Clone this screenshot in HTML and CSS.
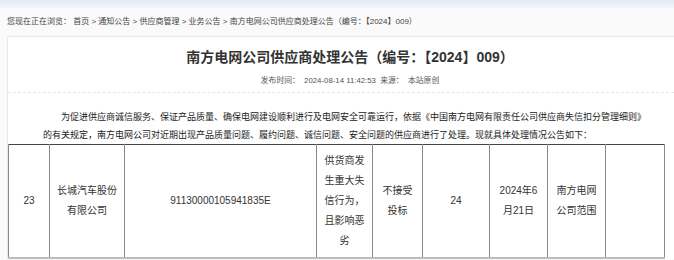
FILE: index.html
```html
<!DOCTYPE html>
<html lang="zh-CN">
<head>
    <meta charset="UTF-8">
    <meta name="viewport" content="width=device-width, initial-scale=1.0">
    <title>南方电网公司供应商处理公告（编号：【2024】009）</title>
    <link rel="stylesheet" href="styles.css">
</head>
<body>
    <div class="top-shadow"></div>
    <div class="crumb">
        您现在正在浏览：&nbsp;首页 &gt; 通知公告 &gt; 供应商管理 &gt; 业务公告 &gt; 南方电网公司供应商处理公告（编号：【2024】009）
    </div>

    <div class="main">
        <div class="head">
            <h1>南方电网公司供应商处理公告（编号：【2024】009）</h1>
            <p class="meta">发布时间：&nbsp; 2024-08-14 11:42:53&nbsp; 来源：&nbsp; 本站原创</p>
        </div>

        <p class="content">为促进供应商诚信服务、保证产品质量、确保电网建设顺利进行及电网安全可靠运行，依据《中国南方电网有限责任公司供应商失信扣分管理细则》的有关规定，南方电网公司对近期出现产品质量问题、履约问题、诚信问题、安全问题的供应商进行了处理。现就具体处理情况公告如下：</p>

        <table class="list">
            <colgroup>
                <col class="c-no">
                <col class="c-name">
                <col class="c-code">
                <col class="c-reason">
                <col class="c-measure">
                <col class="c-months">
                <col class="c-date">
                <col class="c-range">
                <col class="c-note">
            </colgroup>
            <tr>
                <td>23</td>
                <td>长城汽车股份有限公司</td>
                <td>91130000105941835E</td>
                <td>供货商发生重大失信行为，且影响恶劣</td>
                <td>不接受投标</td>
                <td>24</td>
                <td>2024年6月21日</td>
                <td>南方电网公司范围</td>
                <td></td>
            </tr>
        </table>
    </div>
</body>
</html>
```

FILE: styles.css
```css
body {
    margin: 0;
    background: #fafafa;
    color: #333;
    font-family: "Liberation Sans", "Noto Sans CJK SC", sans-serif;
    overflow: hidden;
}
.top-shadow {
    height: 9px;
    background: linear-gradient(#e4e9f5, #f7f8fc);
}
.crumb {
    height: 27px;
    line-height: 26px;
    padding-left: 7px;
    font-size: 8px;
    color: #444;
    white-space: nowrap;
}
.main {
    margin-left: 7px;
    background: #fff;
    border-top: 1px solid #e9e9e9;
    border-left: 1px solid #e9e9e9;
}
.head {
    padding-left: 18px;
    text-align: center;
    border-bottom: 1px dashed #e6e6e6;
}
h1 {
    margin: 0;
    padding-top: 10px;
    font-size: 14px;
    line-height: 20px;
    font-weight: bold;
    color: #333;
}
.meta {
    margin: 8px 0 0;
    padding-bottom: 5px;
    font-size: 7.8px;
    line-height: 12px;
    color: #555;
}
.content {
    width: 67.5em;
    margin: 15px 0 0 35px;
    font-family: "Noto Sans CJK SC", sans-serif;
    font-size: 9px;
    line-height: 18px;
    text-indent: 2em;
    color: #222;
}
/* 处理名单表格 */
.list {
    table-layout: fixed;
    width: 656px;
    border-collapse: collapse;
    font-size: 10px;
    line-height: 20px;
    color: #333;
    border-top: 1px solid #444;
    border-bottom: 2px solid #bbb;
}
.list td {
    height: 100px;
    padding: 6px;
    border-left: 1px solid #888;
    border-right: 1px solid #888;
    text-align: center;
    vertical-align: middle;
    word-break: break-all;
}
.c-no { width: 41px; }
.c-name { width: 75px; }
.c-code { width: 192px; }
.c-reason { width: 56px; }
.c-measure { width: 50px; }
.c-months { width: 67px; }
.c-date { width: 58px; }
.c-range { width: 58px; }
.c-note { width: 59px; }
```
